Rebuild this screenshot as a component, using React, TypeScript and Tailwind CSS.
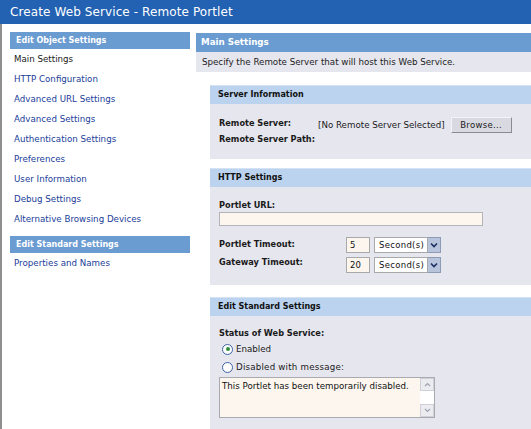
import React from "react";

const navItems = [
  "Main Settings",
  "HTTP Configuration",
  "Advanced URL Settings",
  "Advanced Settings",
  "Authentication Settings",
  "Preferences",
  "User Information",
  "Debug Settings",
  "Alternative Browsing Devices",
];

function NavHeader({ children }: { children: React.ReactNode }) {
  return (
    <div className="h-[17px] w-[180px] bg-[#6a9bd1] pl-[6px] flex items-center text-white font-bold text-[8px] leading-none">
      {children}
    </div>
  );
}

function NavItem({ label, active }: { label: string; active?: boolean }) {
  return (
    <div
      className={
        "h-[20px] flex items-center pl-[4px] text-[8.7px] leading-none " +
        (active ? "text-[#1a1a1a]" : "text-[#21409a]")
      }
    >
      {label}
    </div>
  );
}

function SubHeader({ children }: { children: React.ReactNode }) {
  return (
    <div className="h-[19px] bg-[#bbd3ee] border-t border-[#d3e2f4] pl-[8px] flex items-center font-bold text-[8px] leading-none text-[#111]">
      {children}
    </div>
  );
}

function Select({ value }: { value: string }) {
  return (
    <div className="flex items-center gap-[4px]">
      <div className="w-[24px] h-[16px] bg-[#fdf6ef] border border-[#a9a9a9] pl-[3px] flex items-center text-[8.5px] leading-none text-[#111]">
        {value}
      </div>
      <div className="flex h-[16px]">
        <div className="w-[54px] h-[16px] bg-white border border-[#a9a9a9] pl-[4px] flex items-center text-[8.5px] leading-none tracking-[0.3px] text-[#111]">
          Second(s)
        </div>
        <div className="w-[13px] h-[16px] bg-[#b7c4dc] border border-l-0 border-[#8e9bb5] flex items-center justify-center">
          <svg width="8" height="6" viewBox="0 0 8 6">
            <path d="M1 1.5 L4 4.5 L7 1.5" stroke="#1d2f63" strokeWidth="1.6" fill="none" />
          </svg>
        </div>
      </div>
    </div>
  );
}

function Radio({ checked }: { checked?: boolean }) {
  return (
    <div className="w-[11px] h-[11px] rounded-full border border-[#3d62a6] bg-white flex items-center justify-center">
      {checked && <div className="w-[4px] h-[4px] rounded-full bg-[#2f8f3a]" />}
    </div>
  );
}

function ScrollArrow({ up }: { up?: boolean }) {
  return (
    <div className="h-[13px] bg-[#ebebf0] border border-[#d0d0d8] flex items-center justify-center">
      <svg width="7" height="5" viewBox="0 0 7 5">
        <path
          d={up ? "M1 4 L3.5 1.5 L6 4" : "M1 1 L3.5 3.5 L6 1"}
          stroke="#a0a4b4"
          strokeWidth="1.2"
          fill="none"
        />
      </svg>
    </div>
  );
}

export default function App() {
  return (
    <div className="w-[531px] h-[429px] overflow-hidden bg-white font-['DejaVu_Sans',sans-serif]">
      <div className="h-[24px] bg-[#2361b2] text-white text-[12px] leading-none pl-[10px] flex items-center tracking-[0.1px]">
        Create Web Service - Remote Portlet
      </div>
      <div className="flex h-[405px] border-l-2 border-[#8f8f8f]">
        <nav className="w-[188px] shrink-0 pl-[8px] pt-[8px]">
          <NavHeader>Edit Object Settings</NavHeader>
          {navItems.map((n, i) => (
            <NavItem key={n} label={n} active={i === 0} />
          ))}
          <div className="mt-[7px]">
            <NavHeader>Edit Standard Settings</NavHeader>
          </div>
          <NavItem label="Properties and Names" />
        </nav>
        <main className="flex-1 pl-[6px] pt-[9px]">
          <div className="h-[19px] bg-[#6a9bd1] pl-[5px] flex items-center text-white font-bold text-[8.7px] leading-none">
            Main Settings
          </div>
          <div className="h-[20px] bg-[#e6e6ee] pl-[6px] flex items-center text-[8.7px] leading-none text-[#222]">
            Specify the Remote Server that will host this Web Service.
          </div>

          <div className="ml-[14px] mt-[13px]">
            {/* Server Information */}
            <SubHeader>Server Information</SubHeader>
            <div className="bg-[#e6e6ee] pl-[9px] pt-[13px] pb-[14px] text-[#1a1a1a]">
              <div className="flex items-start h-[16px]">
                <div className="w-[99px] leading-[12px] font-bold text-[8.2px]">Remote Server:</div>
                <div className="mt-[2px] leading-[12px] text-[8.7px]">[No Remote Server Selected]</div>
                <div className="ml-[6px] w-[61px] h-[16px] bg-[#d9d9e1] border border-t-[#f4f4f8] border-l-[#f4f4f8] border-b-[#8a8a92] border-r-[#8a8a92] flex items-center justify-center text-[8.5px] leading-none tracking-[0.3px]">
                  Browse...
                </div>
              </div>
              <div className="leading-[12px] font-bold text-[8.2px]">Remote Server Path:</div>
            </div>

            {/* HTTP Settings */}
            <div className="mt-[9px]">
              <SubHeader>HTTP Settings</SubHeader>
            </div>
            <div className="bg-[#e6e6ee] pl-[9px] pt-[12px] pb-[12px] text-[#1a1a1a]">
              <div className="leading-[12px] font-bold text-[8.2px]">Portlet URL:</div>
              <div className="mt-[1px] w-[264px] h-[14px] bg-[#fdf6ef] border border-[#b4b4b8]" />
              <div className="mt-[11px] flex items-start h-[16px]">
                <div className="w-[127px] mt-[1px] leading-[12px] font-bold text-[8.2px]">Portlet Timeout:</div>
                <Select value="5" />
              </div>
              <div className="mt-[4px] flex items-start h-[16px]">
                <div className="w-[127px] -mt-[1px] leading-[12px] font-bold text-[8.2px]">Gateway Timeout:</div>
                <Select value="20" />
              </div>
            </div>

            {/* Edit Standard Settings */}
            <div className="mt-[12px]">
              <SubHeader>Edit Standard Settings</SubHeader>
            </div>
            <div className="bg-[#e6e6ee] pl-[9px] pt-[11px] h-[140px] text-[#1a1a1a]">
              <div className="leading-[12px] font-bold text-[8.2px]">Status of Web Service:</div>
              <div className="mt-[4px] h-[12px] flex items-center pl-[3px] gap-[3px]">
                <Radio checked />
                <span className="text-[8.7px] leading-none">Enabled</span>
              </div>
              <div className="mt-[6px] h-[12px] flex items-center pl-[3px] gap-[3px]">
                <Radio />
                <span className="text-[8.7px] leading-none tracking-[0.2px]">Disabled with message:</span>
              </div>
              <div className="mt-[4px] w-[216px] h-[41px] bg-[#fdf6ef] border border-[#a9a9b0] flex">
                <div className="flex-1 pl-[2px] pt-[2px] leading-[12px] text-[8.7px] text-[#111]">
                  This Portlet has been temporarily disabled.
                </div>
                <div className="w-[14px] flex flex-col bg-white">
                  <ScrollArrow up />
                  <div className="flex-1 bg-white" />
                  <ScrollArrow />
                </div>
              </div>
            </div>
          </div>
        </main>
      </div>
    </div>
  );
}
